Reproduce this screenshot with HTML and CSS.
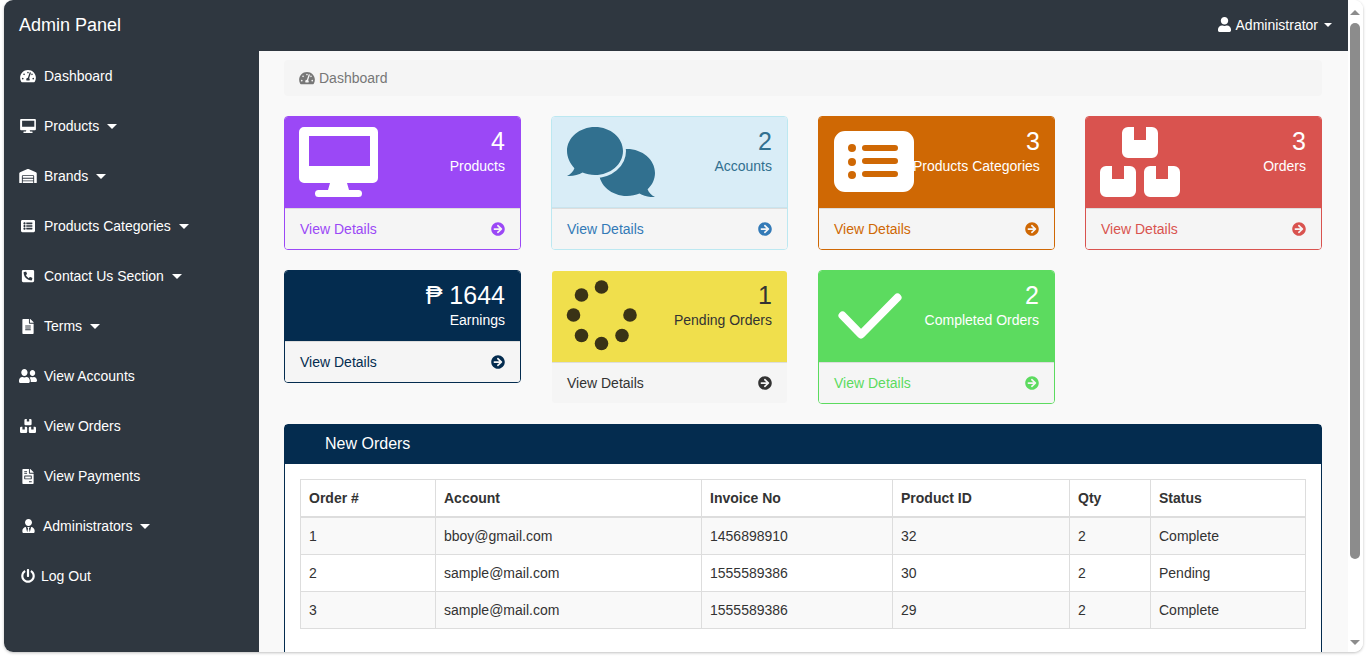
FILE: index.html
```html
<!DOCTYPE html>
<html>
    <head>
        <meta charset="utf-8">
        <title>Admin Panel</title>
        <link rel="stylesheet" href="styles.css">
    </head>
    <body>
        <svg class="sprite" xmlns="http://www.w3.org/2000/svg">
            <symbol id="i-gauge" viewBox="0 0 576 512"><path d="M288 32C128.94 32 0 160.94 0 320c0 52.8 14.25 102.26 39.06 144.8 5.61 9.62 16.3 15.2 27.44 15.2h443c11.14 0 21.83-5.58 27.44-15.2C561.75 422.26 576 372.8 576 320c0-159.06-128.94-288-288-288zm0 64c14.71 0 26.58 10.13 30.32 23.65-1.11 2.26-2.64 4.23-3.42 6.65l-9.22 27.67c-5.13 3.49-10.97 6.03-17.68 6.03-17.67 0-32-14.33-32-32S270.33 96 288 96zM96 384c-17.67 0-32-14.33-32-32s14.33-32 32-32 32 14.33 32 32-14.33 32-32 32zm48-160c-17.67 0-32-14.33-32-32s14.33-32 32-32 32 14.33 32 32-14.33 32-32 32zm246.77-72.41l-61.33 184C343.13 347.33 352 364.54 352 384c0 11.72-3.38 22.55-8.88 32H232.88c-5.5-9.45-8.88-20.28-8.88-32 0-33.94 26.5-61.43 59.9-63.59l61.34-184.01c4.17-12.56 17.73-19.45 30.36-15.17 12.57 4.19 19.35 17.79 15.17 30.36zm14.66 57.2l15.52-46.55c3.47-1.29 7.13-2.23 11.05-2.23 17.67 0 32 14.33 32 32s-14.33 32-32 32c-11.38-.01-20.89-6.28-26.57-15.22zM480 384c-17.67 0-32-14.33-32-32s14.33-32 32-32 32 14.33 32 32-14.33 32-32 32z"/></symbol>
            <symbol id="i-desktop" viewBox="0 0 79 70"><path fill-rule="evenodd" d="M5 0h69a5 5 0 0 1 5 5v46a5 5 0 0 1-5 5H48l2 7h9.500a3.500 3.500 0 0 1 0 7h-40a3.500 3.500 0 0 1 0-7H29l2-7H5a5 5 0 0 1-5-5V5a5 5 0 0 1 5-5zM10 9v30h61V9H10z"/></symbol>
            <symbol id="i-arrow" viewBox="0 0 512 512"><path d="M256 8c137 0 248 111 248 248S393 504 256 504 8 393 8 256 119 8 256 8zm-28.9 143.6l75.5 72.4H120c-13.3 0-24 10.7-24 24v16c0 13.3 10.7 24 24 24h182.6l-75.5 72.4c-9.7 9.3-9.9 24.8-.4 34.3l11 10.9c9.4 9.4 24.6 9.4 33.9 0L404.3 273c9.4-9.4 9.4-24.6 0-33.9L271.6 106.3c-9.4-9.4-24.6-9.4-33.9 0l-11 10.9c-9.5 9.6-9.3 25.1.4 34.4z"/></symbol>
        </svg>

        <div class="window">
            <div class="main">
                <div class="topbar">
                    <span class="brand">Admin Panel</span>
                    <a class="user-menu">
                        <svg class="user-ico" viewBox="0 0 448 512"><path d="M224 256c70.7 0 128-57.3 128-128S294.7 0 224 0 96 57.3 96 128s57.3 128 128 128zm89.6 32h-16.7c-22.2 10.2-46.9 16-72.9 16s-50.6-5.8-72.9-16h-16.7C60.2 288 0 348.2 0 422.4V464c0 26.5 21.5 48 48 48h352c26.5 0 48-21.5 48-48v-41.6c0-74.2-60.2-134.4-134.4-134.4z"/></svg>
                        Administrator
                        <span class="caret-small"></span>
                    </a>
                </div>

                <div class="below">
                    <ul class="sidebar">
                        <li><a><span class="nav-ico"><svg width="16" height="14"><use href="#i-gauge"/></svg></span>Dashboard</a></li>
                        <li><a><span class="nav-ico"><svg width="16" height="14"><use href="#i-desktop"/></svg></span>Products<span class="caret"></span></a></li>
                        <li><a><span class="nav-ico"><svg width="18" height="14" viewBox="0 0 640 512"><path d="M504 352H136.4c-4.4 0-8 3.6-8 8l-.1 48c0 4.4 3.6 8 8 8H504c4.4 0 8-3.6 8-8v-48c0-4.4-3.6-8-8-8zm0 96H136.1c-4.4 0-8 3.6-8 8l-.1 48c0 4.4 3.6 8 8 8h368c4.4 0 8-3.6 8-8v-48c0-4.4-3.6-8-8-8zm0-192H136.6c-4.4 0-8 3.6-8 8l-.1 48c0 4.4 3.6 8 8 8H504c4.4 0 8-3.6 8-8v-48c0-4.4-3.6-8-8-8zm106.5-139L338.4 3.7a48.15 48.15 0 0 0-36.9 0L29.5 117C11.7 124.5 0 141.9 0 161.3V504c0 4.4 3.6 8 8 8h80c4.4 0 8-3.6 8-8V256c0-17.6 14.6-32 32.6-32h382.8c18 0 32.6 14.4 32.6 32v248c0 4.4 3.6 8 8 8h80c4.4 0 8-3.6 8-8V161.3c0-19.4-11.7-36.8-29.5-44.3z"/></svg></span>Brands<span class="caret"></span></a></li>
                        <li><a><span class="nav-ico"><svg width="16" height="14" viewBox="0 0 512 512"><path d="M464 480H48c-26.51 0-48-21.49-48-48V80c0-26.51 21.49-48 48-48h416c26.51 0 48 21.49 48 48v352c0 26.51-21.49 48-48 48zM128 120c-22.091 0-40 17.909-40 40s17.909 40 40 40 40-17.909 40-40-17.909-40-40-40zm0 96c-22.091 0-40 17.909-40 40s17.909 40 40 40 40-17.909 40-40-17.909-40-40-40zm0 96c-22.091 0-40 17.909-40 40s17.909 40 40 40 40-17.909 40-40-17.909-40-40-40zm288-136v-32c0-6.627-5.373-12-12-12H204c-6.627 0-12 5.373-12 12v32c0 6.627 5.373 12 12 12h200c6.627 0 12-5.373 12-12zm0 96v-32c0-6.627-5.373-12-12-12H204c-6.627 0-12 5.373-12 12v32c0 6.627 5.373 12 12 12h200c6.627 0 12-5.373 12-12zm0 96v-32c0-6.627-5.373-12-12-12H204c-6.627 0-12 5.373-12 12v32c0 6.627 5.373 12 12 12h200c6.627 0 12-5.373 12-12z"/></svg></span>Products Categories<span class="caret"></span></a></li>
                        <li><a><span class="nav-ico"><svg width="14" height="14" viewBox="0 0 448 512"><path transform="matrix(-1 0 0 1 448 0)" d="M400 32H48C21.49 32 0 53.49 0 80v352c0 26.51 21.49 48 48 48h352c26.51 0 48-21.49 48-48V80c0-26.51-21.49-48-48-48zM94 416c-7.033 0-13.057-4.873-14.616-11.627l-14.998-65a15 15 0 0 1 8.707-17.16l69.998-29.999a15 15 0 0 1 17.518 4.289l30.997 37.885c48.944-22.963 88.297-62.858 110.781-110.78l-37.886-30.997a15.001 15.001 0 0 1-4.289-17.518l30-69.998a15.001 15.001 0 0 1 17.16-8.707l65 14.998A14.997 14.997 0 0 1 384 126c0 160.292-129.945 290-290 290z"/></svg></span>Contact Us Section<span class="caret"></span></a></li>
                        <li><a><span class="nav-ico"><svg width="12" height="15" viewBox="0 0 384 512"><path d="M224 136V0H24C10.7 0 0 10.7 0 24v464c0 13.3 10.7 24 24 24h336c13.3 0 24-10.7 24-24V160H248c-13.2 0-24-10.8-24-24zm64 236c0 6.6-5.4 12-12 12H108c-6.6 0-12-5.4-12-12v-8c0-6.6 5.4-12 12-12h168c6.6 0 12 5.4 12 12v8zm0-64c0 6.6-5.4 12-12 12H108c-6.6 0-12-5.4-12-12v-8c0-6.6 5.4-12 12-12h168c6.6 0 12 5.4 12 12v8zm0-72v8c0 6.6-5.4 12-12 12H108c-6.6 0-12-5.4-12-12v-8c0-6.6 5.4-12 12-12h168c6.6 0 12 5.4 12 12zm96-114.1v6.1H256V0h6.1c6.4 0 12.5 2.5 17 7l97.9 98c4.5 4.5 7 10.6 7 16.9z"/></svg></span>Terms<span class="caret"></span></a></li>
                        <li><a><span class="nav-ico"><svg width="18" height="14" viewBox="0 32 640 448" preserveAspectRatio="none"><path d="M192 256c61.9 0 112-50.1 112-112S253.9 32 192 32 80 82.1 80 144s50.1 112 112 112zm76.8 32h-8.3c-20.8 10-43.9 16-68.5 16s-47.6-6-68.5-16h-8.3C51.6 288 0 339.6 0 403.2V432c0 26.5 21.5 48 48 48h288c26.5 0 48-21.5 48-48v-28.8c0-63.6-51.6-115.2-115.2-115.2zM480 256c53 0 96-43 96-96s-43-96-96-96-96 43-96 96 43 96 96 96zm48 32h-3.8c-13.9 4.8-28.6 8-44.2 8s-30.3-3.2-44.2-8H432c-20.4 0-39.2 5.9-55.7 15.4 24.4 26.3 39.7 61.2 39.7 99.8v38.4c0 2.2-.5 4.3-.6 6.4H592c26.5 0 48-21.5 48-48 0-61.9-50.1-112-112-112z"/></svg></span>View Accounts</a></li>
                        <li><a><span class="nav-ico"><svg width="16" height="14" viewBox="0 0 80 70"><path d="M28 0h6v13h12V0h6a6 6 0 0 1 6 6v19a6 6 0 0 1-6 6H28a6 6 0 0 1-6-6V6a6 6 0 0 1 6-6zM6 39h6v13h12V39h6a6 6 0 0 1 6 6v19a6 6 0 0 1-6 6H6a6 6 0 0 1-6-6V45a6 6 0 0 1 6-6zM50 39h6v13h12V39h6a6 6 0 0 1 6 6v19a6 6 0 0 1-6 6H50a6 6 0 0 1-6-6V45a6 6 0 0 1 6-6z"/></svg></span>View Orders</a></li>
                        <li><a><span class="nav-ico"><svg width="12" height="15" viewBox="0 0 384 512"><path d="M288 256H96v64h192v-64zm89-151L279.1 7c-4.5-4.5-10.6-7-17-7H256v128h128v-6.1c0-6.3-2.5-12.4-7-16.9zm-153 31V0H24C10.7 0 0 10.7 0 24v464c0 13.3 10.7 24 24 24h336c13.3 0 24-10.7 24-24V160H248c-13.2 0-24-10.8-24-24zM64 72c0-4.42 3.58-8 8-8h80c4.42 0 8 3.58 8 8v16c0 4.42-3.58 8-8 8H72c-4.42 0-8-3.58-8-8V72zm0 64c0-4.42 3.58-8 8-8h80c4.42 0 8 3.58 8 8v16c0 4.42-3.58 8-8 8H72c-4.42 0-8-3.58-8-8v-16zm256 304c0 4.42-3.58 8-8 8h-80c-4.42 0-8-3.58-8-8v-16c0-4.42 3.58-8 8-8h80c4.42 0 8 3.58 8 8v16zm0-200v96c0 8.84-7.16 16-16 16H80c-8.84 0-16-7.16-16-16v-96c0-8.84 7.16-16 16-16h224c8.84 0 16 7.16 16 16z"/></svg></span>View Payments</a></li>
                        <li><a><span class="nav-ico nav-ico-admin"><svg width="13" height="14" viewBox="0 0 448 512"><path d="M224 256c70.7 0 128-57.3 128-128S294.7 0 224 0 96 57.3 96 128s57.3 128 128 128zm95.8 32.6L272 480l-32-136 32-56h-96l32 56-32 136-47.8-191.4C56.9 292 0 350.3 0 422.4V464c0 26.5 21.5 48 48 48h352c26.5 0 48-21.5 48-48v-41.6c0-72.1-56.9-130.4-128.2-133.8z"/></svg></span>Administrators<span class="caret"></span></a></li>
                        <li><a><span class="nav-ico nav-ico-power"><svg width="14" height="14" viewBox="0 0 512 512"><path d="M400 54.1c63 45 104 118.6 104 201.9 0 136.8-110.8 247.7-247.5 248C120 504.3 8.2 393 8 256.4 7.9 173.1 48.9 99.3 111.8 54.2c11.7-8.3 28-4.8 35 7.7L162.6 90c5.9 10.5 3.1 23.8-6.6 31-41.5 30.8-68 79.6-68 134.9-.1 92.3 74.5 168.1 168 168.1 91.6 0 168.6-74.2 168-169.1-.3-51.8-24.7-101.8-68.1-134-9.7-7.2-12.4-20.5-6.5-30.9l15.8-28.1c7-12.4 23.2-16.1 34.8-7.8zM296 264V24c0-13.3-10.7-24-24-24h-32c-13.3 0-24 10.7-24 24v240c0 13.3 10.7 24 24 24h32c13.3 0 24-10.7 24-24z"/></svg></span>Log Out</a></li>
                    </ul>

                    <div class="content">
                        <div class="breadcrumb">
                            <svg width="16" height="14"><use href="#i-gauge"/></svg>
                            Dashboard
                        </div>

                        <div class="cards">
                            <div class="card card-purple">
                                <div class="card-head">
                                    <svg class="big-desktop" width="79" height="70"><use href="#i-desktop"/></svg>
                                    <div class="card-nums"><div class="num">4</div><div class="label">Products</div></div>
                                </div>
                                <a class="card-foot">View Details<svg width="14" height="14"><use href="#i-arrow"/></svg></a>
                            </div>

                            <div class="card card-info">
                                <div class="card-head">
                                    <svg class="big-comments" width="88" height="70" viewBox="0 0 88 70">
                                        <path d="M60 22c15.500 0 28 10.700 28 24 0 6.300-2.800 12-7.400 16.300 1 3 3.500 6 7.400 7.700-5.500.5-11.500-1-15.500-3.500-3.700 1.600-8 2.500-12.500 2.500-15.500 0-28-10.700-28-24s12.500-23 28-23z"/>
                                        <path class="bubble-front" d="M28 0c15.500 0 28 10.700 28 24s-12.500 24-28 24c-4.500 0-8.800-.9-12.500-2.500-4 2.500-10 4-15.500 3.500 3.900-1.700 6.400-4.700 7.400-7.700C2.800 36 0 30.300 0 24 0 10.700 12.500 0 28 0z"/>
                                    </svg>
                                    <div class="card-nums"><div class="num">2</div><div class="label">Accounts</div></div>
                                </div>
                                <a class="card-foot">View Details<svg width="14" height="14"><use href="#i-arrow"/></svg></a>
                            </div>

                            <div class="card card-orange">
                                <div class="card-head">
                                    <svg class="big-list" width="80" height="61" viewBox="0 0 80 61">
                                        <path fill-rule="evenodd" d="M11 0h58a11 11 0 0 1 11 11v39a11 11 0 0 1-11 11H11A11 11 0 0 1 0 50V11A11 11 0 0 1 11 0zM18 13a4 4 0 1 0 0 8 4 4 0 0 0 0-8zm0 14a4 4 0 1 0 0 8 4 4 0 0 0 0-8zm0 13a4 4 0 1 0 0 8 4 4 0 0 0 0-8zM31 14a3 3 0 0 0 0 6h30a3 3 0 0 0 0-6H31zm0 13a3 3 0 0 0 0 6h30a3 3 0 0 0 0-6H31zm0 13a3 3 0 0 0 0 6h30a3 3 0 0 0 0-6H31z"/>
                                    </svg>
                                    <div class="card-nums"><div class="num">3</div><div class="label">Products Categories</div></div>
                                </div>
                                <a class="card-foot">View Details<svg width="14" height="14"><use href="#i-arrow"/></svg></a>
                            </div>

                            <div class="card card-red">
                                <div class="card-head">
                                    <svg class="big-boxes" width="80" height="70" viewBox="0 0 80 70">
                                        <path d="M28 0h6v13h12V0h6a6 6 0 0 1 6 6v19a6 6 0 0 1-6 6H28a6 6 0 0 1-6-6V6a6 6 0 0 1 6-6zM6 39h6v13h12V39h6a6 6 0 0 1 6 6v19a6 6 0 0 1-6 6H6a6 6 0 0 1-6-6V45a6 6 0 0 1 6-6zM50 39h6v13h12V39h6a6 6 0 0 1 6 6v19a6 6 0 0 1-6 6H50a6 6 0 0 1-6-6V45a6 6 0 0 1 6-6z"/>
                                    </svg>
                                    <div class="card-nums"><div class="num">3</div><div class="label">Orders</div></div>
                                </div>
                                <a class="card-foot">View Details<svg width="14" height="14"><use href="#i-arrow"/></svg></a>
                            </div>

                            <div class="card card-navy">
                                <div class="card-head">
                                    <div class="card-nums"><div class="num">₱ 1644</div><div class="label">Earnings</div></div>
                                </div>
                                <a class="card-foot">View Details<svg width="14" height="14"><use href="#i-arrow"/></svg></a>
                            </div>

                            <div class="card card-yellow">
                                <div class="card-head">
                                    <svg class="big-spinner" width="71" height="71" viewBox="0 0 71 71">
                                        <circle cx="35.500" cy="7" r="6.800"/>
                                        <circle cx="15.500" cy="15" r="6.800"/>
                                        <circle cx="7.500" cy="35" r="6.800"/>
                                        <circle cx="15.500" cy="55.500" r="6.800"/>
                                        <circle cx="35.500" cy="63.500" r="6.800"/>
                                        <circle cx="56" cy="55.500" r="6.800"/>
                                        <circle cx="64" cy="35" r="6.800"/>
                                    </svg>
                                    <div class="card-nums"><div class="num">1</div><div class="label">Pending Orders</div></div>
                                </div>
                                <a class="card-foot">View Details<svg width="14" height="14"><use href="#i-arrow"/></svg></a>
                            </div>

                            <div class="card card-green">
                                <div class="card-head">
                                    <svg class="big-check" width="64" height="46" viewBox="0 0 64 46">
                                        <path d="M4.500 22.500 23 41.500 59.500 4.500"/>
                                    </svg>
                                    <div class="card-nums"><div class="num">2</div><div class="label">Completed Orders</div></div>
                                </div>
                                <a class="card-foot">View Details<svg width="14" height="14"><use href="#i-arrow"/></svg></a>
                            </div>
                        </div>

                        <div class="orders">
                            <div class="orders-head">New Orders</div>
                            <div class="orders-body">
                                <table>
                                    <thead>
                                        <tr>
                                            <th class="col-order">Order #</th>
                                            <th class="col-account">Account</th>
                                            <th class="col-invoice">Invoice No</th>
                                            <th class="col-product">Product ID</th>
                                            <th class="col-qty">Qty</th>
                                            <th>Status</th>
                                        </tr>
                                    </thead>
                                    <tbody>
                                        <tr><td>1</td><td>bboy@gmail.com</td><td>1456898910</td><td>32</td><td>2</td><td>Complete</td></tr>
                                        <tr><td>2</td><td>sample@mail.com</td><td>1555589386</td><td>30</td><td>2</td><td>Pending</td></tr>
                                        <tr><td>3</td><td>sample@mail.com</td><td>1555589386</td><td>29</td><td>2</td><td>Complete</td></tr>
                                    </tbody>
                                </table>
                            </div>
                        </div>
                    </div><!-- the end content -->
                </div><!-- the end below -->
            </div><!-- the end main -->

            <div class="scrollbar">
                <span class="arrow-up"></span>
                <span class="thumb"></span>
                <span class="arrow-down"></span>
            </div>
        </div><!-- the end window -->
    </body>
</html>
```

FILE: styles.css
```css
*{
    box-sizing: border-box;
}

html, body{
    height: 100%;
}

body{
    margin: 0;
    overflow: hidden;
    background-color: #fff;
    font-family: "Liberation Sans", Arial, sans-serif;
    font-size: 14px;
    line-height: 20px;
    color: #333;
}

.sprite{
    display: none;
}

.window{
    display: flex;
    width: 1359px;
    height: 652px;
    margin-left: 4px;
    border-radius: 9px;
    overflow: hidden;
    background-color: #fff;
    box-shadow: 0 1px 3px rgba(0, 0, 0, .25);
}

.main{
    display: flex;
    flex-direction: column;
    width: 1344px;
}

/* top bar */
.topbar{
    display: flex;
    align-items: center;
    justify-content: space-between;
    flex: none;
    height: 51px;
    padding: 0 16px 2px 15px;
    background-color: #2f3740;
    color: #fff;
}

.brand{
    font-size: 18px;
}

.user-menu{
    display: flex;
    align-items: center;
}

.user-ico{
    width: 13px;
    height: 15px;
    margin-right: 5px;
    fill: #fff;
}

.caret-small{
    width: 0;
    height: 0;
    margin-left: 6px;
    border-top: 4px solid #fff;
    border-left: 4px solid transparent;
    border-right: 4px solid transparent;
}

.below{
    display: flex;
    flex: 1;
    min-height: 0;
}

/* side menu */
.sidebar{
    flex: none;
    width: 255px;
    margin: 0;
    padding: 0;
    list-style: none;
    background-color: #2f3740;
    color: #fff;
}

.sidebar li a{
    display: flex;
    align-items: center;
    height: 50px;
    padding-left: 14px;
}

.nav-ico{
    display: flex;
    align-items: center;
    justify-content: center;
    width: 20px;
    margin-right: 6px;
}

.nav-ico svg{
    fill: #fff;
}

.nav-ico-admin{
    margin-right: 5px;
}

.nav-ico-power{
    margin-right: 3px;
}

.caret{
    width: 0;
    height: 0;
    margin-left: 8px;
    border-top: 5px solid #fff;
    border-left: 5px solid transparent;
    border-right: 5px solid transparent;
}

/* content */
.content{
    flex: 1;
    min-width: 0;
    overflow: hidden;
    padding: 9px 26px 0 25px;
    background-color: #f9f9f9;
}

.breadcrumb{
    display: flex;
    align-items: center;
    gap: 4px;
    height: 36px;
    padding: 0 15px;
    margin-bottom: 20px;
    border-radius: 4px;
    background-color: #f5f5f5;
    color: #777;
}

.breadcrumb svg{
    fill: #777;
}

.cards{
    display: flex;
    flex-wrap: wrap;
    align-items: flex-start;
    gap: 20px 30px;
    margin-bottom: 20px;
}

.card{
    width: 237px;
    border: 1px solid;
    border-radius: 4px;
    overflow: hidden;
    background-color: #fff;
}

.card-head{
    display: flex;
    justify-content: space-between;
    height: 91px;
    padding: 10px 15px 0 14px;
}

.card-nums{
    flex: none;
    margin-left: auto;
    text-align: right;
    white-space: nowrap;
}

.num{
    font-size: 25px;
    line-height: 28px;
}

.label{
    margin-top: 1px;
}

.card-foot{
    display: flex;
    align-items: center;
    justify-content: space-between;
    height: 41px;
    padding: 0 15px;
    border-top: 1px solid #ddd;
    background-color: #f5f5f5;
}

.card-foot svg{
    fill: currentColor;
}

.big-desktop{
    flex: none;
    fill: #fff;
}

.big-comments{
    flex: none;
    margin-left: 1px;
    fill: #31708f;
}

.bubble-front{
    stroke: #d9edf7;
    stroke-width: 6;
    paint-order: stroke;
}

.big-list{
    flex: none;
    margin: 4px -1px 0 1px;
    fill: #fff;
}

.big-boxes{
    flex: none;
    fill: #fff;
}

.big-spinner{
    flex: none;
    margin-top: -1px;
    fill: #3a3316;
}

.big-check{
    flex: none;
    margin-top: 12px;
    margin-left: 5px;
    fill: none;
    stroke: #fff;
    stroke-width: 8;
    stroke-linecap: round;
    stroke-linejoin: round;
}

.card-purple{
    border-color: #9b48f6;
}
.card-purple .card-head{
    background-color: #9b48f6;
    color: #fff;
}
.card-purple .card-foot{
    color: #9b48f6;
}

.card-info{
    border-color: #bce8f1;
}
.card-info .card-head{
    border-bottom: 1px solid #c9e4ee;
    background-color: #d9edf7;
    color: #31708f;
}
.card-info .card-foot{
    color: #337ab7;
}

.card-orange{
    border-color: #cf6804;
}
.card-orange .card-head{
    background-color: #cf6804;
    color: #fff;
}
.card-orange .card-foot{
    color: #cf6804;
}

.card-red{
    border-color: #d9534f;
}
.card-red .card-head{
    background-color: #d9534f;
    color: #fff;
}
.card-red .card-foot{
    color: #d9534f;
}

.card-navy{
    border-color: #042c4f;
}
.card-navy .card-head{
    height: 70px;
    background-color: #042c4f;
    color: #fff;
}
.card-navy .card-foot{
    color: #042c4f;
}

.card-yellow{
    border-color: #f9f9f9;
}
.card-yellow .card-head{
    background-color: #f0df4c;
    color: #333;
}
.card-yellow .card-foot{
    color: #333;
}

.card-green{
    border-color: #5cdb5f;
}
.card-green .card-head{
    background-color: #5cdb5f;
    color: #fff;
}
.card-green .card-foot{
    color: #5cdb5f;
}

/* orders table */
.orders{
    border: 1px solid #042c4f;
    border-radius: 4px;
    background-color: #fff;
}

.orders-head{
    height: 39px;
    padding-left: 40px;
    font-size: 16px;
    line-height: 37px;
    background-color: #042c4f;
    color: #fff;
}

.orders-body{
    padding: 15px 15px 60px;
}

table{
    width: 100%;
    table-layout: fixed;
    border-collapse: collapse;
}

th, td{
    padding: 8px;
    border: 1px solid #ddd;
    text-align: left;
}

th{
    border-bottom-width: 2px;
}

tbody tr:nth-child(odd){
    background-color: #f9f9f9;
}

.col-order{
    width: 135px;
}

.col-account{
    width: 266px;
}

.col-invoice{
    width: 191px;
}

.col-product{
    width: 177px;
}

.col-qty{
    width: 81px;
}

/* fake browser scrollbar */
.scrollbar{
    display: flex;
    flex-direction: column;
    align-items: center;
    width: 15px;
    padding: 10px 1px 7px 0;
    background-color: #fff;
}

.thumb{
    width: 10px;
    height: 536px;
    margin-top: 8px;
    border-radius: 5px;
    background-color: #8c8c8c;
}

.arrow-up, .arrow-down{
    width: 0;
    height: 0;
    border-left: 5px solid transparent;
    border-right: 5px solid transparent;
}

.arrow-up{
    border-bottom: 5px solid #8c8c8c;
}

.arrow-down{
    margin-top: auto;
    border-top: 5px solid #8c8c8c;
}
```
